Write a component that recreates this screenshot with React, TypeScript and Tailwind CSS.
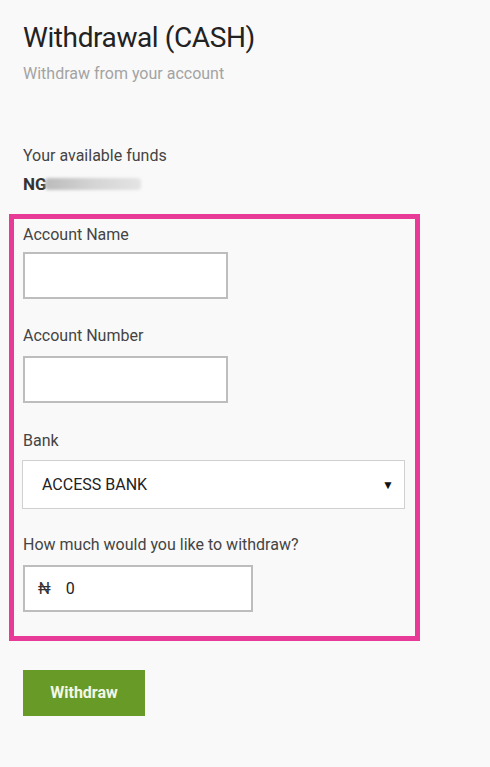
import React from 'react';

export default function App() {
  return (
    <div className="min-h-[767px] bg-[#f9f9f9] px-[9px] pt-[21px] font-['Roboto',sans-serif] text-[#333]">
      <div className="pl-[14px]">
        <h1 className="text-[28px] leading-[34px] tracking-[-0.4px] text-[#222]">Withdrawal (CASH)</h1>
        <p className="mt-[10px] text-[16px] leading-[18px] text-[#a3a3a3]">Withdraw from your account</p>

        <p className="mt-[64px] text-[16px] leading-[18px] text-[#444]">Your available funds</p>
        <div className="mt-[9px] flex items-center">
          <span className="text-[17px] font-bold leading-[20px] text-[#333]">NG</span>
          <span className="ml-[-2px] h-[12px] w-[96px] rounded-sm bg-gradient-to-r from-[#bbb] via-[#d4d4d4] to-[#e4e4e4] blur-[1.5px]" />
        </div>
      </div>

      <div className="mt-[20px] w-[411px] border-[5px] border-[#e83b98] px-[9px] pt-[7px] pb-[24px]">
        <label className="block text-[16px] leading-[18px] text-[#444]">Account Name</label>
        <input className="mt-[8px] block h-[47px] w-[205px] border-2 border-[#bdbdbd] bg-white" />

        <label className="mt-[28px] block text-[16px] leading-[18px] text-[#444]">Account Number</label>
        <input className="mt-[11px] block h-[47px] w-[205px] border-2 border-[#bdbdbd] bg-white" />

        <label className="mt-[29px] block text-[16px] leading-[18px] text-[#444]">Bank</label>
        <div className="mt-[10px] ml-[-1px] flex h-[49px] w-[383px] items-center justify-between border border-[#d0d0d0] bg-white pl-[19px] pr-[10px]">
          <span className="text-[16px] text-[#222]">ACCESS BANK</span>
          <span className="text-[12px] text-[#111]">▼</span>
        </div>

        <label className="mt-[27px] block text-[16px] leading-[18px] text-[#444]">How much would you like to withdraw?</label>
        <div className="mt-[11px] flex h-[47px] w-[230px] items-center border-2 border-[#bdbdbd] bg-white pl-[13px]">
          <span className="text-[16px] text-[#333]">₦</span>
          <span className="ml-[15px] text-[16px] text-[#222]">0</span>
        </div>
      </div>

      <button className="ml-[14px] mt-[29px] h-[46px] w-[122px] bg-[#689a28] text-[16px] font-bold text-[#f3f7e6]">
        Withdraw
      </button>
    </div>
  );
}
